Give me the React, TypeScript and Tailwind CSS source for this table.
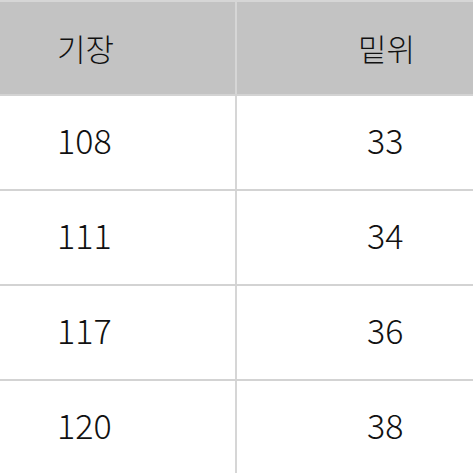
import React from "react";

const rows = [
  ["108", "33"],
  ["111", "34"],
  ["117", "36"],
  ["120", "38"],
];

export default function App() {
  return (
    <div
      className="w-[473px] h-[473px] overflow-hidden bg-white text-[#111111] font-light"
      style={{ fontFamily: '"Noto Sans CJK KR", "Noto Sans", sans-serif' }}
    >
      <div className="h-[2px] bg-[#d6d6d6]" />
      <div className="grid grid-cols-[235px_2px_236px] h-[92px] bg-[#c3c3c3]">
        <div className="flex items-center pl-[57px] text-[31px] leading-none pb-[2px]">기장</div>
        <div className="bg-[#d6d6d6]" />
        <div className="flex items-center pl-[121px] text-[31px] leading-none pb-[2px]">밑위</div>
      </div>
      {rows.map(([a, b]) => (
        <div key={a}>
          <div className="h-[2px] bg-[#d3d3d3]" />
          <div className="grid grid-cols-[235px_2px_236px] h-[93px]">
            <div className="flex items-center pl-[57px] text-[34px] leading-none pb-[6px]">{a}</div>
            <div className="bg-[#d6d6d6]" />
            <div className="flex items-center pl-[130px] text-[34px] leading-none pb-[6px]">{b}</div>
          </div>
        </div>
      ))}
    </div>
  );
}
